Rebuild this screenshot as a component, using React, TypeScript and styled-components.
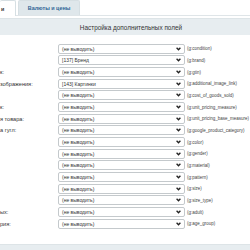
import React from "react";
import styled, { createGlobalStyle } from "styled-components";

const GlobalStyle = createGlobalStyle`
  html, body {
    margin: 0;
    padding: 0;
    background: #ffffff;
  }
  body {
    font-family: "Liberation Sans", Arial, sans-serif;
  }
`;

const fields = [
  { label: "", value: "(не выводить)", code: "(g:condition)" },
  { label: "", value: "[137] Бренд", code: "(g:brand)" },
  { label: "к:", value: "(не выводить)", code: "(g:gtin)" },
  { label: "зображения:", value: "[143] Картинки", code: "(g:additional_image_link)" },
  { label: "", value: "(не выводить)", code: "(g:cost_of_goods_sold)" },
  { label: "к:", value: "(не выводить)", code: "(g:unit_pricing_measure)" },
  { label: "я товара:", value: "(не выводить)", code: "(g:unit_pricing_base_measure)" },
  { label: "а гугл:", value: "(не выводить)", code: "(g:google_product_category)" },
  { label: "", value: "(не выводить)", code: "(g:color)" },
  { label: "", value: "(не выводить)", code: "(g:gender)" },
  { label: "", value: "(не выводить)", code: "(g:material)" },
  { label: "", value: "(не выводить)", code: "(g:pattern)" },
  { label: "", value: "(не выводить)", code: "(g:size)" },
  { label: "", value: "(не выводить)", code: "(g:size_type)" },
  { label: "ых:", value: "(не выводить)", code: "(g:adult)" },
  { label: "рия:", value: "(не выводить)", code: "(g:age_group)" },
];

export default function App() {
  return (
    <Page>
      <GlobalStyle />
      <TabBar>
        <Tab $active $width={16}>
          и
        </Tab>
        <Tab $width={62}>Валюты и цены</Tab>
      </TabBar>
      <HeaderBar>Настройка дополнительных полей</HeaderBar>
      <FieldList>
        {fields.map((f) => (
          <FieldRow key={f.code}>
            <Label>{f.label}</Label>
            <SelectBox>
              <span>{f.value}</span>
              <svg width="5" height="4" viewBox="0 0 5 4">
                <polyline
                  points="0.6,0.8 2.5,2.8 4.4,0.8"
                  fill="none"
                  stroke="#222"
                  strokeWidth="1.3"
                />
              </svg>
            </SelectBox>
            <Code>{f.code}</Code>
          </FieldRow>
        ))}
      </FieldList>
      <FooterBar />
    </Page>
  );
}

const Page = styled.div`
  width: 250px;
  height: 250px;
  overflow: hidden;
  display: flex;
  flex-direction: column;
`;

const TabBar = styled.div`
  display: flex;
  align-items: flex-end;
  gap: 2px;
  height: 15px;
  border-bottom: 1px solid #dfe5e8;
`;

const Tab = styled.div<{ $active?: boolean; $width: number }>`
  width: ${(p) => p.$width}px;
  box-sizing: border-box;
  display: flex;
  align-items: center;
  justify-content: ${(p) => (p.$active ? "flex-start" : "center")};
  padding-left: ${(p) => (p.$active ? "1px" : "0")};
  font-size: 5.4px;
  font-weight: 700;
  color: ${(p) => (p.$active ? "#333" : "#2f6496")};
  background: ${(p) => (p.$active ? "#ffffff" : "#dfe7eb")};
  border: 1px solid #d6dfe3;
  border-left: ${(p) => (p.$active ? "none" : "1px solid #d6dfe3")};
  border-bottom: none;
  border-radius: 2px 2px 0 0;
  margin-bottom: ${(p) => (p.$active ? "-1px" : "0")};
  height: ${(p) => (p.$active ? "16px" : "15px")};
`;

const HeaderBar = styled.div`
  margin-top: 2px;
  height: 16px;
  display: flex;
  align-items: center;
  justify-content: center;
  padding-left: 12px;
  background: #e7edf0;
  border-top: 1px solid #dde4e7;
  font-size: 6.4px;
  color: #333;
`;

const FieldList = styled.div`
  display: flex;
  flex-direction: column;
  padding-top: 8px;
`;

const FieldRow = styled.div`
  display: grid;
  grid-template-columns: 58px 127px auto;
  align-items: center;
  height: 11.67px;
`;

const Label = styled.div`
  font-size: 5.6px;
  color: #333;
  white-space: nowrap;
  overflow: hidden;
`;

const SelectBox = styled.div`
  height: 10px;
  box-sizing: border-box;
  border: 1px solid #c4c9cc;
  border-radius: 2px;
  background: #fff;
  display: flex;
  align-items: center;
  justify-content: space-between;
  padding: 0 3px;
  font-size: 5px;
  color: #333;

  svg {
    display: block;
  }
`;

const Code = styled.div`
  padding-left: 2px;
  font-size: 4.5px;
  color: #444;
  white-space: nowrap;
`;

const FooterBar = styled.div`
  margin-top: auto;
  height: 5px;
  background: #e7edf0;
  border-top: 1px solid #dde4e7;
`;
